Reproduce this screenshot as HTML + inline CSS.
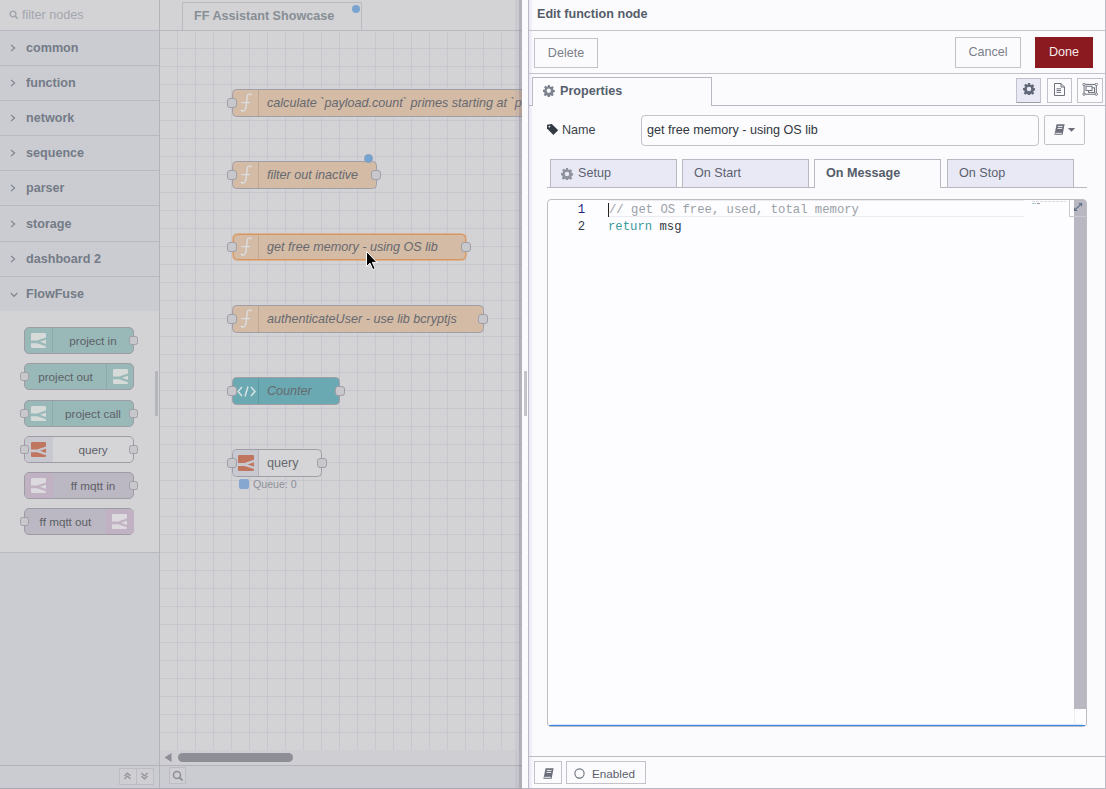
<!DOCTYPE html>
<html><head><meta charset="utf-8">
<style>
*{box-sizing:border-box;margin:0;padding:0}
html,body{width:1106px;height:789px;overflow:hidden;background:#cbccd1;font-family:"Liberation Sans",sans-serif}
.a{position:absolute}
/* palette */
#pal{left:0;top:0;width:160px;height:789px;background:#cbccd1}
#psearch{left:0;top:0;width:159px;height:31px;background:#d3d3d6;border-bottom:1px solid #b8b8be}
.cat{left:0;width:159px;height:35px;border-bottom:1px solid #b9b9c0;background:#cbccd1}
.cat .t{position:absolute;left:26px;top:10px;font-size:12.6px;font-weight:bold;color:#747b87;line-height:15px}
.cat svg{position:absolute;left:10px;top:13px}
#ffc{left:0;top:311px;width:159px;height:242px;background:#d3d3d6;border-bottom:1px solid #b9b9c0}
.pn{position:absolute;left:24px;width:110px;height:27px;border:1px solid #9d9ba3;border-radius:5px;font-size:11.7px;color:#5d6067}
.pn .ic{position:absolute;top:0;width:28px;height:25px}
.pn .l{position:absolute;top:4.5px;line-height:15px;text-align:center}
.port{position:absolute;width:9px;height:9px;border:1px solid #a09fa7;border-radius:2.5px;background:#c7c7cc}
#ws .port{width:10px;height:10px;border-radius:3px}
/* workspace */
#ws{left:160px;top:0;width:362px;height:789px;background:#d3d3d6;overflow:hidden}
#tabbar{left:0;top:0;width:362px;height:31px;background:#d3d3d6;border-bottom:1px solid #b9b9c0}
#tab{left:22px;top:2px;width:180px;height:28px;border:1px solid #bbbac2;border-bottom:none;background:#d3d3d6;font-size:12.6px;font-weight:bold;color:#878e95}
#grid{left:0;top:31px;width:362px;height:719px;
background-color:#d3d3d6;
background-image:linear-gradient(to right,#c8c7d0 1px,transparent 1px),linear-gradient(to bottom,#c8c7d0 1px,transparent 1px);
background-size:18px 18px;background-position:17px 17px}
.nd{position:absolute;height:28px;border:1px solid #a09ea6;border-radius:4.5px;font-size:12.6px;font-style:italic;color:#67696f;white-space:nowrap;overflow:visible}
.nd .ic{position:absolute;left:0;top:0;width:26px;height:26px;border-right:1px solid rgba(0,0,0,0.1)}
.nd .l{position:absolute;left:34px;top:5px;line-height:16px}
#hscroll{left:0;top:750px;width:362px;height:15px;background:#cfcfd3}
/* tray */
#tray{left:522px;top:0;width:584px;height:789px;background:#fbfbfe}
.btn{position:absolute;border:1px solid #c3c2cb;background:#fbfbfe;font-size:12.6px;color:#7b7f87;text-align:center}
.stab{position:absolute;top:159px;width:127px;height:28px;border:1px solid #b9b7c1;border-bottom:none;background:#e9e9f5;font-size:12.6px;color:#5b6170}
.ln{position:absolute;font-family:"Liberation Mono",monospace;font-size:12.25px;line-height:17px;white-space:pre}
</style></head><body>

<!-- ============ PALETTE ============ -->
<div id="pal" class="a">
  <div id="psearch" class="a">
    <svg class="a" style="left:9px;top:10px" width="10" height="10" viewBox="0 0 10 10"><circle cx="4" cy="4" r="2.9" fill="none" stroke="#a2a4ad" stroke-width="1.4"/><path d="M6 6 L8.6 8.6" stroke="#a2a4ad" stroke-width="1.6"/></svg>
    <div class="a" style="left:22px;top:8px;font-size:12.6px;color:#a4a6ad;line-height:15px">filter nodes</div>
  </div>
  <div class="a" style="left:159px;top:0;width:1px;height:789px;background:#b3b3ba"></div>

  <div class="cat a" style="top:31px"><svg width="6" height="8" viewBox="0 0 6 8"><path d="M1 0.8 L4.6 4 L1 7.2" fill="none" stroke="#7a808c" stroke-width="1.1"/></svg><div class="t">common</div></div>
  <div class="cat a" style="top:66px"><svg width="6" height="8" viewBox="0 0 6 8"><path d="M1 0.8 L4.6 4 L1 7.2" fill="none" stroke="#7a808c" stroke-width="1.1"/></svg><div class="t">function</div></div>
  <div class="cat a" style="top:101px"><svg width="6" height="8" viewBox="0 0 6 8"><path d="M1 0.8 L4.6 4 L1 7.2" fill="none" stroke="#7a808c" stroke-width="1.1"/></svg><div class="t">network</div></div>
  <div class="cat a" style="top:136px"><svg width="6" height="8" viewBox="0 0 6 8"><path d="M1 0.8 L4.6 4 L1 7.2" fill="none" stroke="#7a808c" stroke-width="1.1"/></svg><div class="t">sequence</div></div>
  <div class="cat a" style="top:171px"><svg width="6" height="8" viewBox="0 0 6 8"><path d="M1 0.8 L4.6 4 L1 7.2" fill="none" stroke="#7a808c" stroke-width="1.1"/></svg><div class="t">parser</div></div>
  <div class="cat a" style="top:206px;height:36px"><svg width="6" height="8" viewBox="0 0 6 8" style="top:14px"><path d="M1 0.8 L4.6 4 L1 7.2" fill="none" stroke="#7a808c" stroke-width="1.1"/></svg><div class="t" style="top:11px">storage</div></div>
  <div class="cat a" style="top:242px"><svg width="6" height="8" viewBox="0 0 6 8"><path d="M1 0.8 L4.6 4 L1 7.2" fill="none" stroke="#7a808c" stroke-width="1.1"/></svg><div class="t">dashboard 2</div></div>
  <div class="cat a" style="top:277px;height:34px;border-bottom:none"><svg width="8" height="6" viewBox="0 0 8 6" style="left:10px;top:15px"><path d="M0.8 1 L4 4.4 L7.2 1" fill="none" stroke="#7a808c" stroke-width="1.1"/></svg><div class="t">FlowFuse</div></div>

  <div id="ffc" class="a">
    <!-- project in -->
    <div class="pn" style="top:16px;background:#98b9b8">
      <div class="ic" style="left:0;border-right:1px solid rgba(0,0,0,0.08)"><svg class="a" style="left:6px;top:5px" width="15" height="15" viewBox="0 0 16 16"><path d="M0 1.2 Q0 0 1.2 0 H14.8 Q16 0 16 1.2 V4.8 L6.6 7.9 H0 Z M0 10.9 H6.6 L16 14 V14.8 Q16 16 14.8 16 H1.2 Q0 16 0 14.8 Z M9.6 9.4 L16 7.2 V11.6 Z" fill="#d6dad9"/></svg></div>
      <div class="l" style="left:28px;width:80px">project in</div>
      <div class="port" style="left:104px;top:8px"></div>
    </div>
    <!-- project out -->
    <div class="pn" style="top:52px;background:#98b9b8">
      <div class="ic" style="left:81px;border-left:1px solid rgba(0,0,0,0.08)"><svg class="a" style="left:6px;top:5px" width="15" height="15" viewBox="0 0 16 16"><path d="M0 1.2 Q0 0 1.2 0 H14.8 Q16 0 16 1.2 V4.8 L6.6 7.9 H0 Z M0 10.9 H6.6 L16 14 V14.8 Q16 16 14.8 16 H1.2 Q0 16 0 14.8 Z M9.6 9.4 L16 7.2 V11.6 Z" fill="#d6dad9"/></svg></div>
      <div class="l" style="left:0;width:81px">project out</div>
      <div class="port" style="left:-5px;top:8px"></div>
    </div>
    <!-- project call -->
    <div class="pn" style="top:89px;background:#98b9b8">
      <div class="ic" style="left:0;border-right:1px solid rgba(0,0,0,0.08)"><svg class="a" style="left:6px;top:5px" width="15" height="15" viewBox="0 0 16 16"><path d="M0 1.2 Q0 0 1.2 0 H14.8 Q16 0 16 1.2 V4.8 L6.6 7.9 H0 Z M0 10.9 H6.6 L16 14 V14.8 Q16 16 14.8 16 H1.2 Q0 16 0 14.8 Z M9.6 9.4 L16 7.2 V11.6 Z" fill="#d6dad9"/></svg></div>
      <div class="l" style="left:28px;width:80px">project call</div>
      <div class="port" style="left:-5px;top:8px"></div>
      <div class="port" style="left:104px;top:8px"></div>
    </div>
    <!-- query -->
    <div class="pn" style="top:125px;background:#d5d5d8">
      <div class="ic" style="left:0;background:#c8c8d0;border-radius:4px 0 0 4px"><svg class="a" style="left:6px;top:5px" width="15" height="15" viewBox="0 0 16 16"><path d="M0 1.2 Q0 0 1.2 0 H14.8 Q16 0 16 1.2 V4.8 L6.6 7.9 H0 Z M0 10.9 H6.6 L16 14 V14.8 Q16 16 14.8 16 H1.2 Q0 16 0 14.8 Z M9.6 9.4 L16 7.2 V11.6 Z" fill="#c0755f"/></svg></div>
      <div class="l" style="left:28px;width:80px">query</div>
      <div class="port" style="left:-5px;top:8px"></div>
      <div class="port" style="left:104px;top:8px"></div>
    </div>
    <!-- ff mqtt in -->
    <div class="pn" style="top:161px;background:#bcb8c3">
      <div class="ic" style="left:0;background:#c0b2c2;border-radius:4px 0 0 4px"><svg class="a" style="left:6px;top:5px" width="15" height="15" viewBox="0 0 16 16"><path d="M0 1.2 Q0 0 1.2 0 H14.8 Q16 0 16 1.2 V4.8 L6.6 7.9 H0 Z M0 10.9 H6.6 L16 14 V14.8 Q16 16 14.8 16 H1.2 Q0 16 0 14.8 Z M9.6 9.4 L16 7.2 V11.6 Z" fill="#dcd9df"/></svg></div>
      <div class="l" style="left:28px;width:80px">ff mqtt in</div>
      <div class="port" style="left:104px;top:8px"></div>
    </div>
    <!-- ff mqtt out -->
    <div class="pn" style="top:197px;background:#bcb8c3">
      <div class="ic" style="left:81px;background:#c0b2c2;border-radius:0 4px 4px 0"><svg class="a" style="left:6px;top:5px" width="15" height="15" viewBox="0 0 16 16"><path d="M0 1.2 Q0 0 1.2 0 H14.8 Q16 0 16 1.2 V4.8 L6.6 7.9 H0 Z M0 10.9 H6.6 L16 14 V14.8 Q16 16 14.8 16 H1.2 Q0 16 0 14.8 Z M9.6 9.4 L16 7.2 V11.6 Z" fill="#dcd9df"/></svg></div>
      <div class="l" style="left:0;width:81px">ff mqtt out</div>
      <div class="port" style="left:-5px;top:8px"></div>
    </div>
  </div>
  <!-- palette scrollbar -->
  <div class="a" style="left:155px;top:371px;width:3px;height:45px;background:#b5b5bc;border-radius:1px"></div>
  <!-- palette footer -->
  <div class="a" style="left:0;top:765px;width:159px;height:24px;background:#cbccd1;border-top:1px solid #b3b3ba"></div>
  <div class="a" style="left:119px;top:768px;width:35px;height:17px;border:1px solid #bdbbc3;background:#cfcfd3"></div>
  <div class="a" style="left:136px;top:768px;width:1px;height:17px;background:#bdbbc3"></div>
  <svg class="a" style="left:123px;top:771px" width="9" height="10" viewBox="0 0 9 10"><path d="M1.5 5 L4.5 2 L7.5 5 M1.5 8 L4.5 5 L7.5 8" fill="none" stroke="#8d8f99" stroke-width="1.1"/></svg>
  <svg class="a" style="left:140px;top:771px" width="9" height="10" viewBox="0 0 9 10"><path d="M1.5 2 L4.5 5 L7.5 2 M1.5 5 L4.5 8 L7.5 5" fill="none" stroke="#8d8f99" stroke-width="1.1"/></svg>
</div>

<!-- ============ WORKSPACE ============ -->
<div id="ws" class="a">
  <div id="tabbar" class="a">
    <div id="tab" class="a"><div class="a" style="left:11px;top:6px;line-height:15px">FF Assistant Showcase</div>
      <div class="a" style="left:169px;top:2px;width:8px;height:8px;border-radius:50%;background:#7aa4cf"></div></div>
  </div>
  <div id="grid" class="a"></div>

  <!-- calculate -->
  <div class="nd" style="left:72px;top:89px;width:360px;background:#d3bba6">
    <div class="ic"><svg class="a" style="left:5px;top:1px" width="16" height="22" viewBox="0 0 16 22"><path d="M13.4 4.2 C12.8 2.6 10.2 2.2 9.4 4.6 L7.8 17.6 C7.2 20.2 4.4 20.6 2.8 19 M3.2 11.6 H11.8" fill="none" stroke="#dcdde2" stroke-width="1.4"/></svg></div>
    <div class="l">calculate `payload.count` primes starting at `payload.start`</div>
  </div>
  <div class="port" style="left:67px;top:98px"></div>
  <!-- filter -->
  <div class="nd" style="left:72px;top:161px;width:145px;background:#d3bba6">
    <div class="ic"><svg class="a" style="left:5px;top:1px" width="16" height="22" viewBox="0 0 16 22"><path d="M13.4 4.2 C12.8 2.6 10.2 2.2 9.4 4.6 L7.8 17.6 C7.2 20.2 4.4 20.6 2.8 19 M3.2 11.6 H11.8" fill="none" stroke="#dcdde2" stroke-width="1.4"/></svg></div>
    <div class="l">filter out inactive</div>
  </div>
  <div class="port" style="left:67px;top:170px"></div>
  <div class="port" style="left:211px;top:170px"></div>
  <div class="a" style="left:204px;top:154px;width:9px;height:9px;border-radius:50%;background:#72a5d3;border:1px solid #8a9fb5"></div>
  <!-- get free memory (selected) -->
  <div class="nd" style="left:73px;top:234px;width:233px;height:26px;background:#d3bba6;border:1px solid #d9955c;box-shadow:0 0 0 1px rgba(220,156,104,0.55)">
    <div class="ic" style="width:25px;height:24px"><svg class="a" style="left:4px;top:0px" width="16" height="22" viewBox="0 0 16 22"><path d="M13.4 4.2 C12.8 2.6 10.2 2.2 9.4 4.6 L7.8 17.6 C7.2 20.2 4.4 20.6 2.8 19 M3.2 11.6 H11.8" fill="none" stroke="#dcdde2" stroke-width="1.4"/></svg></div>
    <div class="l" style="left:33px;top:4px">get free memory - using OS lib</div>
  </div>
  <div class="port" style="left:67px;top:242px"></div>
  <div class="port" style="left:301px;top:242px"></div>
  <!-- authenticateUser -->
  <div class="nd" style="left:72px;top:305px;width:252px;background:#d3bba6">
    <div class="ic"><svg class="a" style="left:5px;top:1px" width="16" height="22" viewBox="0 0 16 22"><path d="M13.4 4.2 C12.8 2.6 10.2 2.2 9.4 4.6 L7.8 17.6 C7.2 20.2 4.4 20.6 2.8 19 M3.2 11.6 H11.8" fill="none" stroke="#dcdde2" stroke-width="1.4"/></svg></div>
    <div class="l">authenticateUser - use lib bcryptjs</div>
  </div>
  <div class="port" style="left:67px;top:314px"></div>
  <div class="port" style="left:318px;top:314px"></div>
  <!-- Counter -->
  <div class="nd" style="left:72px;top:377px;width:108px;background:#6aa9b2">
    <div class="ic"><svg class="a" style="left:4px;top:8px" width="19" height="11" viewBox="0 0 19 11"><path d="M5 1 L1 5.5 L5 10 M14 1 L18 5.5 L14 10 M11 0.5 L8 10.5" fill="none" stroke="#dce4e6" stroke-width="1.4"/></svg></div>
    <div class="l">Counter</div>
  </div>
  <div class="port" style="left:67px;top:386px"></div>
  <div class="port" style="left:175px;top:386px"></div>
  <!-- query -->
  <div class="nd" style="left:72px;top:449px;width:90px;background:#d5d5d8;font-style:normal">
    <div class="ic" style="background:#c8c8d0;border-radius:4px 0 0 4px"><svg class="a" style="left:5px;top:5px" width="16" height="16" viewBox="0 0 16 16"><path d="M0 1.2 Q0 0 1.2 0 H14.8 Q16 0 16 1.2 V4.8 L6.6 7.9 H0 Z M0 10.9 H6.6 L16 14 V14.8 Q16 16 14.8 16 H1.2 Q0 16 0 14.8 Z M9.6 9.4 L16 7.2 V11.6 Z" fill="#c0755f"/></svg></div>
    <div class="l" style="left:34px">query</div>
  </div>
  <div class="port" style="left:67px;top:458px"></div>
  <div class="port" style="left:157px;top:458px"></div>
  <div class="a" style="left:79px;top:479px;width:10px;height:10px;border-radius:2px;background:#86a7cf"></div>
  <div class="a" style="left:93px;top:478px;font-size:10.6px;color:#8d9096;line-height:12px">Queue: 0</div>

  <!-- cursor -->
  <svg class="a" style="left:206px;top:251px" width="13" height="20" viewBox="0 0 13 20"><path d="M0.5 0.5 L0.5 15.5 L4 12.2 L6.8 18.6 L9.2 17.6 L6.4 11.4 L11 11.4 Z" fill="#000" stroke="#fff" stroke-width="1"/></svg>

  <div id="hscroll" class="a">
    <svg class="a" style="left:4px;top:3px" width="8" height="9" viewBox="0 0 8 9"><path d="M7.5 0 L7.5 9 L0.5 4.5Z" fill="#8e8e96"/></svg>
    <div class="a" style="left:18px;top:3px;width:115px;height:9px;border-radius:5px;background:#8e8e96"></div>
  </div>
  <div class="a" style="left:0;top:765px;width:362px;height:24px;background:#cbccd1;border-top:1px solid #b3b3ba"></div>
  <div class="a" style="left:9px;top:767px;width:17px;height:17px;border:1px solid #bdbbc3;background:#cfcfd3"></div>
  <svg class="a" style="left:12px;top:770px" width="12" height="12" viewBox="0 0 12 12"><circle cx="5" cy="5" r="3.5" fill="none" stroke="#8d8f99" stroke-width="1.6"/><path d="M7.5 7.5 L10.5 10.5" stroke="#8d8f99" stroke-width="1.8"/></svg>
  <!-- right shadow -->
  <div class="a" style="left:355px;top:0;width:4px;height:789px;background:rgba(150,150,172,0.13)"></div><div class="a" style="left:359px;top:0;width:3px;height:789px;background:rgba(115,110,128,0.33)"></div>
</div>

<!-- ============ TRAY ============ -->
<div id="tray" class="a">
  <div class="a" style="left:0;top:0;width:6px;height:789px;background:#fbfbfe"></div>
  <div class="a" style="left:2px;top:371px;width:3px;height:45px;background:#c5c4cc"></div>
  <div class="a" style="left:6px;top:0;width:1px;height:789px;background:#bdbcc5"></div><div class="a" style="left:7px;top:0;width:4px;height:789px;background:linear-gradient(to right,rgba(190,190,230,0.35),rgba(190,190,230,0))"></div>
  <div class="a" style="left:583px;top:0;width:1px;height:789px;background:#bdbcc5"></div>
  <!-- header -->
  <div class="a" style="left:15px;top:7px;font-size:12.6px;font-weight:bold;color:#555d6a;line-height:15px">Edit function node</div>
  <div class="a" style="left:7px;top:30px;width:576px;height:1px;background:#c3c2cb"></div>
  <div class="btn" style="left:12px;top:38px;width:64px;height:30px;line-height:28px">Delete</div>
  <div class="btn" style="left:433px;top:37px;width:66px;height:31px;line-height:29px">Cancel</div>
  <div class="btn" style="left:513px;top:37px;width:58px;height:31px;line-height:29px;background:#8b1a20;border-color:#8b1a20;color:#f4eaea">Done</div>
  <div class="a" style="left:7px;top:73px;width:576px;height:1px;background:#c3c2cb"></div>
  <!-- properties tab -->
  <div class="a" style="left:7px;top:105px;width:576px;height:1px;background:#b9b7c1"></div>
  <div class="a" style="left:10px;top:77px;width:180px;height:29px;border:1px solid #b9b7c1;border-bottom:none;background:#fbfbfe"></div>
  <svg class="a" style="left:21px;top:85px" width="11.5" height="11.5" viewBox="0 0 16 16"><path fill="#7d838e" d="M6.6 0h2.8l.4 2.2 1.3.6 1.9-1.3 2 2-1.3 1.9.6 1.3 2.2.4v2.8l-2.2.4-.6 1.3 1.3 1.9-2 2-1.9-1.3-1.3.6-.4 2.2H6.6l-.4-2.2-1.3-.6-1.9 1.3-2-2 1.3-1.9-.6-1.3L0 9.4V6.6l2.2-.4.6-1.3-1.3-1.9 2-2 1.9 1.3 1.3-.6zM8 5a3 3 0 100 6 3 3 0 000-6z"/></svg>
  <div class="a" style="left:38px;top:84px;font-size:12.6px;font-weight:bold;color:#56606d;line-height:15px">Properties</div>
  <!-- toolbar icons -->
  <div class="btn" style="left:494px;top:78px;width:25px;height:25px;background:#e9e9f5;border-bottom-color:#9d9ba5"></div>
  <svg class="a" style="left:501px;top:83px" width="12" height="12" viewBox="0 0 16 16"><path fill="#616878" d="M6.6 0h2.8l.4 2.2 1.3.6 1.9-1.3 2 2-1.3 1.9.6 1.3 2.2.4v2.8l-2.2.4-.6 1.3 1.3 1.9-2 2-1.9-1.3-1.3.6-.4 2.2H6.6l-.4-2.2-1.3-.6-1.9 1.3-2-2 1.3-1.9-.6-1.3L0 9.4V6.6l2.2-.4.6-1.3-1.3-1.9 2-2 1.9 1.3 1.3-.6zM8 5a3 3 0 100 6 3 3 0 000-6z"/></svg>
  <div class="btn" style="left:525px;top:78px;width:25px;height:25px"></div>
  <svg class="a" style="left:531px;top:83px" width="13" height="14" viewBox="0 0 13 14"><path d="M1.5 .5h6.5L11.5 4v8.5H1.5z M8 .5V4H11.5" fill="none" stroke="#6e737c" stroke-width="1"/><path d="M3.5 5.8h4.5M3.5 7.5h4.5M3.5 9.4h4.5" stroke="#6e737c" stroke-width="1"/></svg>
  <div class="btn" style="left:555px;top:78px;width:26px;height:25px"></div>
  <svg class="a" style="left:560px;top:83px" width="16" height="14" viewBox="-1 0 16 14"><rect x="1.1" y="1.4" width="12.2" height="9.8" fill="none" stroke="#6e737c" stroke-width="1"/><rect x="5.5" y="4.8" width="6" height="4.6" fill="none" stroke="#6e737c" stroke-width="1"/><rect x="3" y="3.2" width="6" height="4.3" fill="#fbfbfe" stroke="#6e737c" stroke-width="1"/><circle cx="1.1" cy="1.4" r="1.2" fill="#fbfbfe" stroke="#6e737c" stroke-width="0.9"/><circle cx="13.3" cy="1.4" r="1.2" fill="#fbfbfe" stroke="#6e737c" stroke-width="0.9"/><circle cx="1.1" cy="11.2" r="1.2" fill="#fbfbfe" stroke="#6e737c" stroke-width="0.9"/><circle cx="13.3" cy="11.2" r="1.2" fill="#fbfbfe" stroke="#6e737c" stroke-width="0.9"/></svg>

  <!-- name row -->
  <svg class="a" style="left:25px;top:124px" width="12" height="11" viewBox="0 0 12 11"><path d="M0 0.8 L0 4.6 L6.4 11 L11.2 6.2 L4.8 0 Z" fill="#333a44"/><circle cx="2.4" cy="2.6" r="0.9" fill="#fbfbfe"/></svg>
  <div class="a" style="left:40px;top:123px;font-size:12.6px;color:#3d434c;line-height:15px">Name</div>
  <div class="a" style="left:119px;top:115px;width:398px;height:31px;border:1px solid #c3c2cb;border-radius:4px;background:#fcfcfe"></div>
  <div class="a" style="left:125px;top:123px;font-size:12.6px;color:#32363d;line-height:15px">get free memory - using OS lib</div>
  <div class="btn" style="left:522px;top:115px;width:41px;height:30px;border-radius:2px"></div>
  <svg class="a" style="left:532px;top:124px" width="22" height="11" viewBox="0 0 22 11"><path d="M2.6 0.2 H10.6 L8.6 10.8 H0.4 Z" fill="#6b6e78"/><path d="M3.9 2.4 H8.6 M3.5 4.4 H8.2 M1.3 9.3 H7.9" stroke="#fbfbfe" stroke-width="0.9"/><path d="M13.8 4 H21.2 L17.5 7.8 Z" fill="#6b6e78"/></svg>

  <!-- sub tabs -->
  <div class="a" style="left:25px;top:187px;width:540px;height:1px;background:#b9b7c1"></div>
  <div class="stab" style="left:28px"><svg class="a" style="left:10px;top:8px" width="12" height="12" viewBox="0 0 16 16"><path fill="#8d929b" d="M6.6 0h2.8l.4 2.2 1.3.6 1.9-1.3 2 2-1.3 1.9.6 1.3 2.2.4v2.8l-2.2.4-.6 1.3 1.3 1.9-2 2-1.9-1.3-1.3.6-.4 2.2H6.6l-.4-2.2-1.3-.6-1.9 1.3-2-2 1.3-1.9-.6-1.3L0 9.4V6.6l2.2-.4.6-1.3-1.3-1.9 2-2 1.9 1.3 1.3-.6zM8 5a3 3 0 100 6 3 3 0 000-6z"/></svg><div class="a" style="left:27px;top:6px;line-height:15px">Setup</div></div>
  <div class="stab" style="left:160px"><div class="a" style="left:11px;top:6px;line-height:15px">On Start</div></div>
  <div class="stab" style="left:292px;background:#fbfbfe;height:29px;font-weight:bold;color:#555d6a"><div class="a" style="left:11px;top:6px;line-height:15px">On Message</div></div>
  <div class="stab" style="left:425px"><div class="a" style="left:11px;top:6px;line-height:15px">On Stop</div></div>

  <!-- code editor -->
  <div class="a" style="left:25px;top:199px;width:540px;height:528px;border:1px solid #bdbcc5;border-radius:4px;background:#fdfdff"></div>
  <div class="a" style="left:27px;top:725px;width:536px;height:1px;background:#3d88e6"></div><div class="a" style="left:29px;top:724px;width:532px;height:1px;background:#d5e3f6"></div>
  <div class="a" style="left:86px;top:200px;width:416px;height:17px;border-top:1px solid #ececf0;border-bottom:1px solid #ececf0"></div>
  <div class="ln" style="left:52px;top:202px;width:11px;text-align:right;color:#1b2179">1</div>
  <div class="ln" style="left:52px;top:219px;width:11px;text-align:right;color:#34383f">2</div>
  <div class="a" style="left:86px;top:203px;width:1px;height:14px;background:#222"></div>
  <div class="ln" style="left:87px;top:202px;color:#9aa0a6">// get OS free, used, total memory</div>
  <div class="ln" style="left:86px;top:219px;color:#34383f"><span style="color:#3c9a9d">return</span> msg</div>
  <!-- minimap -->
  <div class="a" style="left:510px;top:201px;width:34px;height:1px;background:repeating-linear-gradient(to right,#dcdde2 0 3px,transparent 3px 4px)"></div>
  <div class="a" style="left:510px;top:203px;width:4px;height:1px;background:#a9cfd1"></div>
  <div class="a" style="left:515px;top:203px;width:3px;height:1px;background:#999"></div>
  <!-- scrollbar -->
  <div class="a" style="left:552px;top:200px;width:12px;height:509px;background:#b9b7c1;border-top-right-radius:3px"></div>
  <div class="a" style="left:552px;top:709px;width:1px;height:16px;background:#eeeef2"></div>
  <div class="a" style="left:547px;top:200px;width:17px;height:17px;border-left:1px solid #c9c8d0;border-bottom:1px solid #c9c8d0;background:rgba(255,255,255,0.0)"></div>
  <div class="a" style="left:548px;top:200px;width:4px;height:16px;background:#fdfdff"></div>
  <svg class="a" style="left:551px;top:202px" width="10" height="10" viewBox="0 0 10 10"><path d="M1.5 8.5 L8.5 1.5 M5.8 1.5 H8.5 V4.2 M1.5 5.8 V8.5 H4.2" fill="none" stroke="#62728a" stroke-width="1.1"/></svg>

  <!-- footer -->
  <div class="a" style="left:7px;top:756px;width:576px;height:1px;background:#bdbcc5"></div>
  <div class="btn" style="left:12px;top:761px;width:28px;height:23px"></div>
  <svg class="a" style="left:21px;top:768px" width="12" height="11" viewBox="0 0 12 11"><path d="M2.6 0.2 H10.6 L8.6 10.8 H0.4 Z" fill="#6b6e78"/><path d="M3.9 2.4 H8.6 M3.5 4.4 H8.2 M1.3 9.3 H7.9" stroke="#fbfbfe" stroke-width="0.9"/></svg>
  <div class="btn" style="left:44px;top:761px;width:80px;height:23px"></div>
  <svg class="a" style="left:52px;top:768px" width="12" height="12" viewBox="0 0 12 12"><circle cx="5.5" cy="5.5" r="4.6" fill="none" stroke="#6a707a" stroke-width="1.1"/></svg>
  <div class="a" style="left:70px;top:766px;font-size:11.7px;color:#5a606b;line-height:15px">Enabled</div>
  <div class="a" style="left:0;top:788px;width:584px;height:1px;background:#b9b7c1"></div>
</div>
<div class="a" style="left:0;top:788px;width:522px;height:1px;background:#aaa9b2"></div>
</body></html>
